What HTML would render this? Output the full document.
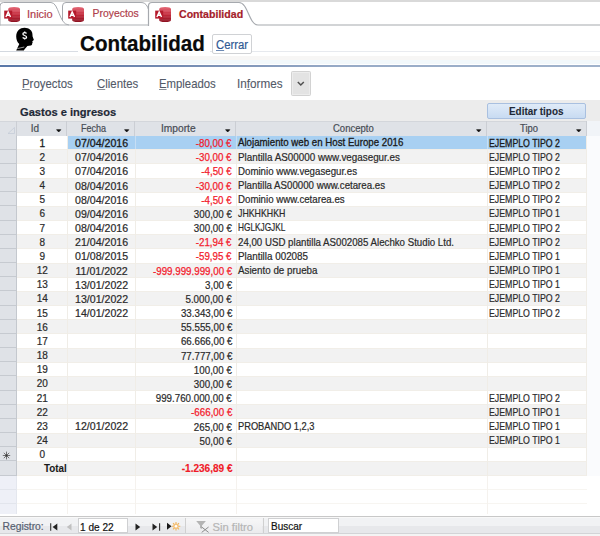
<!DOCTYPE html>
<html><head><meta charset="utf-8"><style>
html,body{margin:0;padding:0;width:600px;height:536px;overflow:hidden;background:#fff;}
body{position:relative;font-family:"Liberation Sans",sans-serif;}
.r{position:absolute;}
.t{position:absolute;white-space:nowrap;line-height:1;-webkit-text-stroke:0.2px currentColor;}
u{text-decoration-thickness:0.8px;text-underline-offset:1.2px;text-decoration-color:#8a8f98;}
</style></head><body>
<div class="r" style="left:0px;top:0.00px;width:600px;height:2.00px;background:#d9d9d9;"></div>
<svg class="r" style="left:0;top:0" width="600" height="27" viewBox="0 0 600 27">
<path d="M62.5 25 L62.5 6 Q62.5 2.5 66 2.5 L141 2.5 C147 2.5 148 8 150 14" fill="#fff" stroke="#a6a9ae" stroke-width="1"/>
<path d="M0 25.5 L0 6 Q0 2.5 3.5 2.5 L51 2.5 C59 2.5 59 25 69 25" fill="#fff" stroke="#a6a9ae" stroke-width="1"/>
<path d="M148.5 26 L148.5 6 Q148.5 2.5 152 2.5 L239 2.5 C248 2.5 249 25 258 25 L600 25" fill="#fff" stroke="#a6a9ae" stroke-width="1.2"/>
<path d="M0 25 L148.5 25" stroke="#adb1b6" stroke-width="1.2"/>
</svg>
<svg class="r" style="left:4px;top:7px" width="17" height="16" viewBox="0 0 17 16">
<defs><linearGradient id="ag4" x1="0" y1="0" x2="0" y2="1"><stop offset="0" stop-color="#e46a78"/><stop offset="0.5" stop-color="#c42a3c"/><stop offset="1" stop-color="#8c1020"/></linearGradient></defs>
<path d="M4.2 2 Q4.2 0 10.1 0 Q16 0 16 2 L16 13 Q16 15 10.1 15 Q4.2 15 4.2 13 Z" fill="url(#ag4)"/>
<path d="M5 4 H16 M5 7 H16 M5 10 H16 M5 13 H16" stroke="#ffffff" stroke-opacity="0.18" stroke-width="0.8"/>
<rect x="0.2" y="3.6" width="8" height="8" fill="#b51a2c"/>
<path d="M1.9 10 L4.2 4.9 L6.5 10 M2.9 8.2 H5.5" stroke="#fff" stroke-width="1.4" fill="none"/>
</svg>
<svg class="r" style="left:68px;top:7px" width="17" height="16" viewBox="0 0 17 16">
<defs><linearGradient id="ag68" x1="0" y1="0" x2="0" y2="1"><stop offset="0" stop-color="#e46a78"/><stop offset="0.5" stop-color="#c42a3c"/><stop offset="1" stop-color="#8c1020"/></linearGradient></defs>
<path d="M4.2 2 Q4.2 0 10.1 0 Q16 0 16 2 L16 13 Q16 15 10.1 15 Q4.2 15 4.2 13 Z" fill="url(#ag68)"/>
<path d="M5 4 H16 M5 7 H16 M5 10 H16 M5 13 H16" stroke="#ffffff" stroke-opacity="0.18" stroke-width="0.8"/>
<rect x="0.2" y="3.6" width="8" height="8" fill="#b51a2c"/>
<path d="M1.9 10 L4.2 4.9 L6.5 10 M2.9 8.2 H5.5" stroke="#fff" stroke-width="1.4" fill="none"/>
</svg>
<svg class="r" style="left:155px;top:7px" width="17" height="16" viewBox="0 0 17 16">
<defs><linearGradient id="ag155" x1="0" y1="0" x2="0" y2="1"><stop offset="0" stop-color="#e46a78"/><stop offset="0.5" stop-color="#c42a3c"/><stop offset="1" stop-color="#8c1020"/></linearGradient></defs>
<path d="M4.2 2 Q4.2 0 10.1 0 Q16 0 16 2 L16 13 Q16 15 10.1 15 Q4.2 15 4.2 13 Z" fill="url(#ag155)"/>
<path d="M5 4 H16 M5 7 H16 M5 10 H16 M5 13 H16" stroke="#ffffff" stroke-opacity="0.18" stroke-width="0.8"/>
<rect x="0.2" y="3.6" width="8" height="8" fill="#b51a2c"/>
<path d="M1.9 10 L4.2 4.9 L6.5 10 M2.9 8.2 H5.5" stroke="#fff" stroke-width="1.4" fill="none"/>
</svg>
<div class="t" style="left:27.00px;top:9.19px;font-size:11px;color:#b0404c">Inicio</div>
<div class="t" style="left:92.60px;top:9.20px;font-size:10.4px;color:#b0404c">Proyectos</div>
<div class="t" style="left:179.00px;top:9.03px;font-size:10.6px;color:#a51c2a;font-weight:bold">Contabilidad</div>
<div class="r" style="left:0px;top:51.00px;width:600px;height:1.00px;background:linear-gradient(to right,#d3d8df,#e6e9ee 40%,#eceef2);"></div>
<div class="r" style="left:0px;top:56.00px;width:600px;height:4.00px;background:#f7f6f5;"></div>
<div class="r" style="left:0px;top:60.00px;width:600px;height:4.00px;background:#f2f8fb;"></div>
<div class="r" style="left:0px;top:65.00px;width:600px;height:2.00px;background:linear-gradient(to right,#5878a9,#7189b1 28%,#98abc7 57%,#a0b2cb);"></div>
<svg class="r" style="left:12px;top:26px" width="26" height="28" viewBox="0 0 26 28">
<path d="M4.2 24.6 L7.3 18 C5.5 16.5 4.2 13.5 4.2 10.4 C4.2 5.2 8 1.8 12.5 1.8 C17 1.8 20.4 4.8 20.4 8 L20.6 10.6 L21.9 14 L20.3 15.2 L20.7 16.5 L20.2 17.2 C20.3 18.7 19.8 19.3 18.8 19.4 L15.4 20 L12.6 23.2 L11.8 24.6 Z" fill="#000"/>
<path d="M5.3 22.6 L12.3 21" stroke="#d8d8d8" stroke-width="0.7"/>
<g transform="translate(12.7 9.5) scale(0.82) translate(-12.7 -9.5)"><path d="M14.9 7 C14.5 6.2 13.7 5.9 12.7 5.9 C11.4 5.9 10.5 6.6 10.5 7.6 C10.5 8.7 11.6 9.1 12.7 9.5 C13.9 9.9 15 10.4 15 11.5 C15 12.5 14 13.1 12.7 13.1 C11.6 13.1 10.8 12.7 10.3 11.9 M12.7 4.7 V5.9 M12.7 13.1 V14.3" stroke="#fff" stroke-width="1.6" fill="none"/></g>
</svg>
<div class="r" style="left:78px;top:30.00px;width:132px;height:24.00px;background:#fff;"></div>
<div class="t" style="left:80.00px;top:33.88px;font-size:21.4px;color:#0a0a0a;font-weight:bold;transform:scaleX(0.964);transform-origin:0 0">Contabilidad</div>
<div class="r" style="left:212px;top:34.00px;width:39.5px;height:20.00px;background:#fff;border:1px solid #d0d2d5;border-radius:2px;box-sizing:border-box"></div>
<div class="t" style="left:215.60px;top:38.64px;font-size:12px;color:#305a94;transform:scaleX(0.94);transform-origin:0 0"><u style="text-decoration-color:#6d8ab5">C</u>errar</div>
<div class="t" style="left:21.70px;top:77.90px;font-size:12.4px;color:#525967;-webkit-text-stroke:0.1px currentColor;transform:scaleX(0.92);transform-origin:0 0"><u>P</u>royectos</div>
<div class="t" style="left:96.50px;top:77.90px;font-size:12.4px;color:#525967;-webkit-text-stroke:0.1px currentColor;transform:scaleX(0.92);transform-origin:0 0"><u>C</u>lientes</div>
<div class="t" style="left:158.90px;top:77.90px;font-size:12.4px;color:#525967;-webkit-text-stroke:0.1px currentColor;transform:scaleX(0.916);transform-origin:0 0"><u>E</u>mpleados</div>
<div class="t" style="left:237.00px;top:77.90px;font-size:12.4px;color:#525967;-webkit-text-stroke:0.1px currentColor;transform:scaleX(0.946);transform-origin:0 0">In<u>f</u>ormes</div>
<div class="r" style="left:291px;top:71.00px;width:19.5px;height:25.00px;background:#e3e3e3;border:1px solid #d2d2d2;border-radius:1.5px;box-sizing:border-box;box-shadow:inset 0 0 0 1px #ececec"></div>
<svg class="r" style="left:297px;top:80.5px" width="8" height="6" viewBox="0 0 8 6"><path d="M0.8 1 L3.8 4 L6.8 1" stroke="#505050" stroke-width="1.5" fill="none"/></svg>
<div class="r" style="left:0px;top:100.30px;width:600px;height:415.00px;background:#ececec;"></div>
<div class="t" style="left:20.00px;top:106.90px;font-size:11.1px;color:#1f2937;font-weight:bold">Gastos e ingresos</div>
<div class="r" style="left:487px;top:103px;width:99px;height:16px;box-sizing:border-box;border:1px solid #a9c0e0;border-radius:2px;background:linear-gradient(#e0ebf8,#c8dbf2)"></div>
<div class="t" style="left:509.00px;top:105.89px;font-size:11px;color:#1f2937;font-weight:bold;-webkit-text-stroke:0.1px currentColor;transform:scaleX(0.9);transform-origin:0 0">Editar tipos</div>
<div class="r" style="left:0px;top:121.00px;width:587px;height:15.00px;background:#dfe2e7;"></div>
<div class="r" style="left:587px;top:121.00px;width:13px;height:15.00px;background:#f1f4f8;"></div>
<div class="r" style="left:0px;top:121.00px;width:587px;height:1.00px;background:#d3d6db;"></div>
<div class="r" style="left:66px;top:121.00px;width:1.3px;height:15.00px;background:#cbced4;"></div>
<div class="r" style="left:134px;top:121.00px;width:1.3px;height:15.00px;background:#cbced4;"></div>
<div class="r" style="left:235px;top:121.00px;width:1.3px;height:15.00px;background:#cbced4;"></div>
<div class="r" style="left:486px;top:121.00px;width:1.3px;height:15.00px;background:#cbced4;"></div>
<div class="r" style="left:586px;top:121.00px;width:1.3px;height:15.00px;background:#cbced4;"></div>
<div class="r" style="left:16px;top:121.00px;width:1px;height:15.00px;background:#cbced4;"></div>
<div class="t" style="left:30.70px;top:124.03px;font-size:10px;color:#474c55">Id</div>
<div class="t" style="left:80.80px;top:124.03px;font-size:10px;color:#474c55;transform:scaleX(0.9);transform-origin:0 0">Fecha</div>
<div class="t" style="left:161.00px;top:124.03px;font-size:10px;color:#474c55;transform:scaleX(1.02);transform-origin:0 0">Importe</div>
<div class="t" style="left:333.30px;top:124.03px;font-size:10px;color:#474c55;transform:scaleX(0.95);transform-origin:0 0">Concepto</div>
<div class="t" style="left:520.00px;top:124.03px;font-size:10px;color:#474c55;transform:scaleX(0.94);transform-origin:0 0">Tipo</div>
<svg class="r" style="left:56.3px;top:128.5px" width="6" height="4" viewBox="0 0 6 4"><path d="M0.6 0.7 H4.8 L2.7 3 Z" fill="#111" stroke="#111" stroke-width="0.7" stroke-linejoin="round"/></svg>
<svg class="r" style="left:124px;top:128.5px" width="6" height="4" viewBox="0 0 6 4"><path d="M0.6 0.7 H4.8 L2.7 3 Z" fill="#111" stroke="#111" stroke-width="0.7" stroke-linejoin="round"/></svg>
<svg class="r" style="left:225.3px;top:128.5px" width="6" height="4" viewBox="0 0 6 4"><path d="M0.6 0.7 H4.8 L2.7 3 Z" fill="#111" stroke="#111" stroke-width="0.7" stroke-linejoin="round"/></svg>
<svg class="r" style="left:475.5px;top:128.5px" width="6" height="4" viewBox="0 0 6 4"><path d="M0.6 0.7 H4.8 L2.7 3 Z" fill="#111" stroke="#111" stroke-width="0.7" stroke-linejoin="round"/></svg>
<svg class="r" style="left:575.8px;top:128.5px" width="6" height="4" viewBox="0 0 6 4"><path d="M0.6 0.7 H4.8 L2.7 3 Z" fill="#111" stroke="#111" stroke-width="0.7" stroke-linejoin="round"/></svg>
<svg class="r" style="left:7px;top:127px" width="8" height="7" viewBox="0 0 8 7"><path d="M7.5 0.5 L7.5 6.5 L1 6.5 Z" fill="none" stroke="#c5cdd8" stroke-width="0.8"/></svg>
<div class="r" style="left:17px;top:135.50px;width:570px;height:14.17px;background:#ffffff;"></div>
<div class="r" style="left:67px;top:135.50px;width:520px;height:13.57px;background:#a8d0f2;"></div>
<div class="r" style="left:0px;top:135.50px;width:16px;height:14.17px;background:#dfe2e7;"></div>
<div class="r" style="left:0px;top:148.67px;width:16px;height:1.00px;background:#c6cad0;"></div>
<div class="r" style="left:17px;top:149.67px;width:570px;height:14.17px;background:#f2f2f2;"></div>
<div class="r" style="left:0px;top:149.67px;width:16px;height:14.17px;background:#dfe2e7;"></div>
<div class="r" style="left:0px;top:162.84px;width:16px;height:1.00px;background:#c6cad0;"></div>
<div class="r" style="left:17px;top:163.84px;width:570px;height:14.17px;background:#ffffff;"></div>
<div class="r" style="left:0px;top:163.84px;width:16px;height:14.17px;background:#dfe2e7;"></div>
<div class="r" style="left:0px;top:177.01px;width:16px;height:1.00px;background:#c6cad0;"></div>
<div class="r" style="left:17px;top:178.01px;width:570px;height:14.17px;background:#f2f2f2;"></div>
<div class="r" style="left:0px;top:178.01px;width:16px;height:14.17px;background:#dfe2e7;"></div>
<div class="r" style="left:0px;top:191.18px;width:16px;height:1.00px;background:#c6cad0;"></div>
<div class="r" style="left:17px;top:192.18px;width:570px;height:14.17px;background:#ffffff;"></div>
<div class="r" style="left:0px;top:192.18px;width:16px;height:14.17px;background:#dfe2e7;"></div>
<div class="r" style="left:0px;top:205.35px;width:16px;height:1.00px;background:#c6cad0;"></div>
<div class="r" style="left:17px;top:206.35px;width:570px;height:14.17px;background:#f2f2f2;"></div>
<div class="r" style="left:0px;top:206.35px;width:16px;height:14.17px;background:#dfe2e7;"></div>
<div class="r" style="left:0px;top:219.52px;width:16px;height:1.00px;background:#c6cad0;"></div>
<div class="r" style="left:17px;top:220.52px;width:570px;height:14.17px;background:#ffffff;"></div>
<div class="r" style="left:0px;top:220.52px;width:16px;height:14.17px;background:#dfe2e7;"></div>
<div class="r" style="left:0px;top:233.69px;width:16px;height:1.00px;background:#c6cad0;"></div>
<div class="r" style="left:17px;top:234.69px;width:570px;height:14.17px;background:#f2f2f2;"></div>
<div class="r" style="left:0px;top:234.69px;width:16px;height:14.17px;background:#dfe2e7;"></div>
<div class="r" style="left:0px;top:247.86px;width:16px;height:1.00px;background:#c6cad0;"></div>
<div class="r" style="left:17px;top:248.86px;width:570px;height:14.17px;background:#ffffff;"></div>
<div class="r" style="left:0px;top:248.86px;width:16px;height:14.17px;background:#dfe2e7;"></div>
<div class="r" style="left:0px;top:262.03px;width:16px;height:1.00px;background:#c6cad0;"></div>
<div class="r" style="left:17px;top:263.03px;width:570px;height:14.17px;background:#f2f2f2;"></div>
<div class="r" style="left:0px;top:263.03px;width:16px;height:14.17px;background:#dfe2e7;"></div>
<div class="r" style="left:0px;top:276.20px;width:16px;height:1.00px;background:#c6cad0;"></div>
<div class="r" style="left:17px;top:277.20px;width:570px;height:14.17px;background:#ffffff;"></div>
<div class="r" style="left:0px;top:277.20px;width:16px;height:14.17px;background:#dfe2e7;"></div>
<div class="r" style="left:0px;top:290.37px;width:16px;height:1.00px;background:#c6cad0;"></div>
<div class="r" style="left:17px;top:291.37px;width:570px;height:14.17px;background:#f2f2f2;"></div>
<div class="r" style="left:0px;top:291.37px;width:16px;height:14.17px;background:#dfe2e7;"></div>
<div class="r" style="left:0px;top:304.54px;width:16px;height:1.00px;background:#c6cad0;"></div>
<div class="r" style="left:17px;top:305.54px;width:570px;height:14.17px;background:#ffffff;"></div>
<div class="r" style="left:0px;top:305.54px;width:16px;height:14.17px;background:#dfe2e7;"></div>
<div class="r" style="left:0px;top:318.71px;width:16px;height:1.00px;background:#c6cad0;"></div>
<div class="r" style="left:17px;top:319.71px;width:570px;height:14.17px;background:#f2f2f2;"></div>
<div class="r" style="left:0px;top:319.71px;width:16px;height:14.17px;background:#dfe2e7;"></div>
<div class="r" style="left:0px;top:332.88px;width:16px;height:1.00px;background:#c6cad0;"></div>
<div class="r" style="left:17px;top:333.88px;width:570px;height:14.17px;background:#ffffff;"></div>
<div class="r" style="left:0px;top:333.88px;width:16px;height:14.17px;background:#dfe2e7;"></div>
<div class="r" style="left:0px;top:347.05px;width:16px;height:1.00px;background:#c6cad0;"></div>
<div class="r" style="left:17px;top:348.05px;width:570px;height:14.17px;background:#f2f2f2;"></div>
<div class="r" style="left:0px;top:348.05px;width:16px;height:14.17px;background:#dfe2e7;"></div>
<div class="r" style="left:0px;top:361.22px;width:16px;height:1.00px;background:#c6cad0;"></div>
<div class="r" style="left:17px;top:362.22px;width:570px;height:14.17px;background:#ffffff;"></div>
<div class="r" style="left:0px;top:362.22px;width:16px;height:14.17px;background:#dfe2e7;"></div>
<div class="r" style="left:0px;top:375.39px;width:16px;height:1.00px;background:#c6cad0;"></div>
<div class="r" style="left:17px;top:376.39px;width:570px;height:14.17px;background:#f2f2f2;"></div>
<div class="r" style="left:0px;top:376.39px;width:16px;height:14.17px;background:#dfe2e7;"></div>
<div class="r" style="left:0px;top:389.56px;width:16px;height:1.00px;background:#c6cad0;"></div>
<div class="r" style="left:17px;top:390.56px;width:570px;height:14.17px;background:#ffffff;"></div>
<div class="r" style="left:0px;top:390.56px;width:16px;height:14.17px;background:#dfe2e7;"></div>
<div class="r" style="left:0px;top:403.73px;width:16px;height:1.00px;background:#c6cad0;"></div>
<div class="r" style="left:17px;top:404.73px;width:570px;height:14.17px;background:#f2f2f2;"></div>
<div class="r" style="left:0px;top:404.73px;width:16px;height:14.17px;background:#dfe2e7;"></div>
<div class="r" style="left:0px;top:417.90px;width:16px;height:1.00px;background:#c6cad0;"></div>
<div class="r" style="left:17px;top:418.90px;width:570px;height:14.17px;background:#ffffff;"></div>
<div class="r" style="left:0px;top:418.90px;width:16px;height:14.17px;background:#dfe2e7;"></div>
<div class="r" style="left:0px;top:432.07px;width:16px;height:1.00px;background:#c6cad0;"></div>
<div class="r" style="left:17px;top:433.07px;width:570px;height:14.17px;background:#f2f2f2;"></div>
<div class="r" style="left:0px;top:433.07px;width:16px;height:14.17px;background:#dfe2e7;"></div>
<div class="r" style="left:0px;top:446.24px;width:16px;height:1.00px;background:#c6cad0;"></div>
<div class="r" style="left:17px;top:447.24px;width:570px;height:14.17px;background:#ffffff;"></div>
<div class="r" style="left:0px;top:447.24px;width:16px;height:14.17px;background:#dfe2e7;"></div>
<div class="r" style="left:0px;top:460.41px;width:16px;height:1.00px;background:#c6cad0;"></div>
<div class="r" style="left:17px;top:461.41px;width:570px;height:14.17px;background:#f2f2f2;"></div>
<div class="r" style="left:0px;top:461.41px;width:16px;height:14.17px;background:#dfe2e7;"></div>
<div class="r" style="left:0px;top:474.58px;width:16px;height:1.00px;background:#c6cad0;"></div>
<div class="r" style="left:17px;top:149.17px;width:570px;height:1.00px;background:#f1eee8;"></div>
<div class="r" style="left:17px;top:163.34px;width:570px;height:1.00px;background:#f1eee8;"></div>
<div class="r" style="left:17px;top:177.51px;width:570px;height:1.00px;background:#f1eee8;"></div>
<div class="r" style="left:17px;top:191.68px;width:570px;height:1.00px;background:#f1eee8;"></div>
<div class="r" style="left:17px;top:205.85px;width:570px;height:1.00px;background:#f1eee8;"></div>
<div class="r" style="left:17px;top:220.02px;width:570px;height:1.00px;background:#f1eee8;"></div>
<div class="r" style="left:17px;top:234.19px;width:570px;height:1.00px;background:#f1eee8;"></div>
<div class="r" style="left:17px;top:248.36px;width:570px;height:1.00px;background:#f1eee8;"></div>
<div class="r" style="left:17px;top:262.53px;width:570px;height:1.00px;background:#f1eee8;"></div>
<div class="r" style="left:17px;top:276.70px;width:570px;height:1.00px;background:#f1eee8;"></div>
<div class="r" style="left:17px;top:290.87px;width:570px;height:1.00px;background:#f1eee8;"></div>
<div class="r" style="left:17px;top:305.04px;width:570px;height:1.00px;background:#f1eee8;"></div>
<div class="r" style="left:17px;top:319.21px;width:570px;height:1.00px;background:#f1eee8;"></div>
<div class="r" style="left:17px;top:333.38px;width:570px;height:1.00px;background:#f1eee8;"></div>
<div class="r" style="left:17px;top:347.55px;width:570px;height:1.00px;background:#f1eee8;"></div>
<div class="r" style="left:17px;top:361.72px;width:570px;height:1.00px;background:#f1eee8;"></div>
<div class="r" style="left:17px;top:375.89px;width:570px;height:1.00px;background:#f1eee8;"></div>
<div class="r" style="left:17px;top:390.06px;width:570px;height:1.00px;background:#f1eee8;"></div>
<div class="r" style="left:17px;top:404.23px;width:570px;height:1.00px;background:#f1eee8;"></div>
<div class="r" style="left:17px;top:418.40px;width:570px;height:1.00px;background:#f1eee8;"></div>
<div class="r" style="left:17px;top:432.57px;width:570px;height:1.00px;background:#f1eee8;"></div>
<div class="r" style="left:17px;top:446.74px;width:570px;height:1.00px;background:#f1eee8;"></div>
<div class="r" style="left:17px;top:460.91px;width:570px;height:1.00px;background:#f1eee8;"></div>
<div class="r" style="left:17px;top:475.08px;width:570px;height:1.00px;background:#f1eee8;"></div>
<div class="r" style="left:67px;top:135.50px;width:1px;height:340.08px;background:#f0ede7;"></div>
<div class="r" style="left:135px;top:135.50px;width:1px;height:340.08px;background:#f0ede7;"></div>
<div class="r" style="left:236px;top:135.50px;width:1px;height:340.08px;background:#f0ede7;"></div>
<div class="r" style="left:487px;top:135.50px;width:1px;height:340.08px;background:#f0ede7;"></div>
<div class="r" style="left:586px;top:135.50px;width:1px;height:340.08px;background:#f0ede7;"></div>
<div class="r" style="left:16px;top:135.50px;width:1px;height:340.08px;background:#c4c8ce;"></div>
<div class="r" style="left:135px;top:135.50px;width:1px;height:13.57px;background:#c6def4;"></div>
<div class="r" style="left:236px;top:135.50px;width:1px;height:13.57px;background:#c6def4;"></div>
<div class="r" style="left:487px;top:135.50px;width:1px;height:13.57px;background:#c6def4;"></div>
<div class="t" style="left:-17.70px;width:120px;text-align:center;top:138.53px;font-size:10px;color:#1a1a1a;-webkit-text-stroke:0.3px currentColor">1</div>
<div class="t" style="left:41.60px;width:120px;text-align:center;top:138.03px;font-size:10.6px;color:#1a1a1a;-webkit-text-stroke:0.3px currentColor">07/04/2016</div>
<div class="t" style="right:368.00px;top:138.11px;font-size:10.5px;color:#f2202c;-webkit-text-stroke:0.25px currentColor;transform:scaleX(0.93);transform-origin:100% 0">-80,00 €</div>
<div class="t" style="left:238.00px;top:138.45px;font-size:10.1px;color:#1a1a1a;-webkit-text-stroke:0.3px currentColor;transform:scaleX(0.96);transform-origin:0 0">Alojamiento web en Host Europe 2016</div>
<div class="t" style="left:489.00px;top:138.53px;font-size:10px;color:#1a1a1a;-webkit-text-stroke:0.3px currentColor;transform:scaleX(0.877);transform-origin:0 0">EJEMPLO TIPO 2</div>
<div class="t" style="left:-17.70px;width:120px;text-align:center;top:152.70px;font-size:10px;color:#2a2a2a">2</div>
<div class="t" style="left:41.60px;width:120px;text-align:center;top:152.20px;font-size:10.6px;color:#2a2a2a">07/04/2016</div>
<div class="t" style="right:368.00px;top:152.28px;font-size:10.5px;color:#f2202c;-webkit-text-stroke:0.25px currentColor;transform:scaleX(0.93);transform-origin:100% 0">-30,00 €</div>
<div class="t" style="left:238.00px;top:152.62px;font-size:10.1px;color:#2a2a2a;transform:scaleX(0.975);transform-origin:0 0">Plantilla AS00000 www.vegasegur.es</div>
<div class="t" style="left:489.00px;top:152.70px;font-size:10px;color:#2a2a2a;transform:scaleX(0.877);transform-origin:0 0">EJEMPLO TIPO 2</div>
<div class="t" style="left:-17.70px;width:120px;text-align:center;top:166.88px;font-size:10px;color:#2a2a2a">3</div>
<div class="t" style="left:41.60px;width:120px;text-align:center;top:166.37px;font-size:10.6px;color:#2a2a2a">07/04/2016</div>
<div class="t" style="right:368.00px;top:166.45px;font-size:10.5px;color:#f2202c;-webkit-text-stroke:0.25px currentColor;transform:scaleX(0.93);transform-origin:100% 0">-4,50 €</div>
<div class="t" style="left:238.00px;top:166.79px;font-size:10.1px;color:#2a2a2a;transform:scaleX(0.96);transform-origin:0 0">Dominio www.vegasegur.es</div>
<div class="t" style="left:489.00px;top:166.88px;font-size:10px;color:#2a2a2a;transform:scaleX(0.877);transform-origin:0 0">EJEMPLO TIPO 2</div>
<div class="t" style="left:-17.70px;width:120px;text-align:center;top:181.04px;font-size:10px;color:#2a2a2a">4</div>
<div class="t" style="left:41.60px;width:120px;text-align:center;top:180.54px;font-size:10.6px;color:#2a2a2a">08/04/2016</div>
<div class="t" style="right:368.00px;top:180.62px;font-size:10.5px;color:#f2202c;-webkit-text-stroke:0.25px currentColor;transform:scaleX(0.93);transform-origin:100% 0">-30,00 €</div>
<div class="t" style="left:238.00px;top:180.96px;font-size:10.1px;color:#2a2a2a;transform:scaleX(0.96);transform-origin:0 0">Plantilla AS00000 www.cetarea.es</div>
<div class="t" style="left:489.00px;top:181.04px;font-size:10px;color:#2a2a2a;transform:scaleX(0.877);transform-origin:0 0">EJEMPLO TIPO 2</div>
<div class="t" style="left:-17.70px;width:120px;text-align:center;top:195.22px;font-size:10px;color:#2a2a2a">5</div>
<div class="t" style="left:41.60px;width:120px;text-align:center;top:194.71px;font-size:10.6px;color:#2a2a2a">08/04/2016</div>
<div class="t" style="right:368.00px;top:194.79px;font-size:10.5px;color:#f2202c;-webkit-text-stroke:0.25px currentColor;transform:scaleX(0.93);transform-origin:100% 0">-4,50 €</div>
<div class="t" style="left:238.00px;top:195.13px;font-size:10.1px;color:#2a2a2a;transform:scaleX(0.96);transform-origin:0 0">Dominio www.cetarea.es</div>
<div class="t" style="left:489.00px;top:195.22px;font-size:10px;color:#2a2a2a;transform:scaleX(0.877);transform-origin:0 0">EJEMPLO TIPO 2</div>
<div class="t" style="left:-17.70px;width:120px;text-align:center;top:209.38px;font-size:10px;color:#2a2a2a">6</div>
<div class="t" style="left:41.60px;width:120px;text-align:center;top:208.88px;font-size:10.6px;color:#2a2a2a">09/04/2016</div>
<div class="t" style="right:368.00px;top:208.96px;font-size:10.5px;color:#2a2a2a;transform:scaleX(0.93);transform-origin:100% 0">300,00 €</div>
<div class="t" style="left:238.00px;top:209.30px;font-size:10.1px;color:#2a2a2a;transform:scaleX(0.87);transform-origin:0 0">JHKHKHKH</div>
<div class="t" style="left:489.00px;top:209.38px;font-size:10px;color:#2a2a2a;transform:scaleX(0.877);transform-origin:0 0">EJEMPLO TIPO 1</div>
<div class="t" style="left:-17.70px;width:120px;text-align:center;top:223.55px;font-size:10px;color:#2a2a2a">7</div>
<div class="t" style="left:41.60px;width:120px;text-align:center;top:223.05px;font-size:10.6px;color:#2a2a2a">08/04/2016</div>
<div class="t" style="right:368.00px;top:223.13px;font-size:10.5px;color:#2a2a2a;transform:scaleX(0.93);transform-origin:100% 0">300,00 €</div>
<div class="t" style="left:238.00px;top:223.47px;font-size:10.1px;color:#2a2a2a;transform:scaleX(0.82);transform-origin:0 0">HGLKJGJKL</div>
<div class="t" style="left:489.00px;top:223.55px;font-size:10px;color:#2a2a2a;transform:scaleX(0.877);transform-origin:0 0">EJEMPLO TIPO 2</div>
<div class="t" style="left:-17.70px;width:120px;text-align:center;top:237.72px;font-size:10px;color:#2a2a2a">8</div>
<div class="t" style="left:41.60px;width:120px;text-align:center;top:237.22px;font-size:10.6px;color:#2a2a2a">21/04/2016</div>
<div class="t" style="right:368.00px;top:237.30px;font-size:10.5px;color:#f2202c;-webkit-text-stroke:0.25px currentColor;transform:scaleX(0.93);transform-origin:100% 0">-21,94 €</div>
<div class="t" style="left:238.00px;top:237.64px;font-size:10.1px;color:#2a2a2a;transform:scaleX(0.96);transform-origin:0 0">24,00 USD plantilla AS002085 Alechko Studio Ltd.</div>
<div class="t" style="left:489.00px;top:237.72px;font-size:10px;color:#2a2a2a;transform:scaleX(0.877);transform-origin:0 0">EJEMPLO TIPO 2</div>
<div class="t" style="left:-17.70px;width:120px;text-align:center;top:251.90px;font-size:10px;color:#2a2a2a">9</div>
<div class="t" style="left:41.60px;width:120px;text-align:center;top:251.39px;font-size:10.6px;color:#2a2a2a">01/08/2015</div>
<div class="t" style="right:368.00px;top:251.47px;font-size:10.5px;color:#f2202c;-webkit-text-stroke:0.25px currentColor;transform:scaleX(0.93);transform-origin:100% 0">-59,95 €</div>
<div class="t" style="left:238.00px;top:251.81px;font-size:10.1px;color:#2a2a2a;transform:scaleX(0.975);transform-origin:0 0">Plantilla 002085</div>
<div class="t" style="left:489.00px;top:251.90px;font-size:10px;color:#2a2a2a;transform:scaleX(0.877);transform-origin:0 0">EJEMPLO TIPO 1</div>
<div class="t" style="left:-17.70px;width:120px;text-align:center;top:266.06px;font-size:10px;color:#2a2a2a">12</div>
<div class="t" style="left:41.60px;width:120px;text-align:center;top:265.56px;font-size:10.6px;color:#2a2a2a">11/01/2022</div>
<div class="t" style="right:368.00px;top:265.64px;font-size:10.5px;color:#f2202c;-webkit-text-stroke:0.25px currentColor;transform:scaleX(0.93);transform-origin:100% 0">-999.999.999,00 €</div>
<div class="t" style="left:238.00px;top:265.98px;font-size:10.1px;color:#2a2a2a;transform:scaleX(0.97);transform-origin:0 0">Asiento de prueba</div>
<div class="t" style="left:489.00px;top:266.06px;font-size:10px;color:#2a2a2a;transform:scaleX(0.877);transform-origin:0 0">EJEMPLO TIPO 1</div>
<div class="t" style="left:-17.70px;width:120px;text-align:center;top:280.24px;font-size:10px;color:#2a2a2a">13</div>
<div class="t" style="left:41.60px;width:120px;text-align:center;top:279.73px;font-size:10.6px;color:#2a2a2a">13/01/2022</div>
<div class="t" style="right:368.00px;top:279.81px;font-size:10.5px;color:#2a2a2a;transform:scaleX(0.93);transform-origin:100% 0">3,00 €</div>
<div class="t" style="left:489.00px;top:280.24px;font-size:10px;color:#2a2a2a;transform:scaleX(0.877);transform-origin:0 0">EJEMPLO TIPO 1</div>
<div class="t" style="left:-17.70px;width:120px;text-align:center;top:294.41px;font-size:10px;color:#2a2a2a">14</div>
<div class="t" style="left:41.60px;width:120px;text-align:center;top:293.90px;font-size:10.6px;color:#2a2a2a">13/01/2022</div>
<div class="t" style="right:368.00px;top:293.98px;font-size:10.5px;color:#2a2a2a;transform:scaleX(0.93);transform-origin:100% 0">5.000,00 €</div>
<div class="t" style="left:489.00px;top:294.41px;font-size:10px;color:#2a2a2a;transform:scaleX(0.877);transform-origin:0 0">EJEMPLO TIPO 2</div>
<div class="t" style="left:-17.70px;width:120px;text-align:center;top:308.57px;font-size:10px;color:#2a2a2a">15</div>
<div class="t" style="left:41.60px;width:120px;text-align:center;top:308.07px;font-size:10.6px;color:#2a2a2a">14/01/2022</div>
<div class="t" style="right:368.00px;top:308.15px;font-size:10.5px;color:#2a2a2a;transform:scaleX(0.93);transform-origin:100% 0">33.343,00 €</div>
<div class="t" style="left:489.00px;top:308.57px;font-size:10px;color:#2a2a2a;transform:scaleX(0.877);transform-origin:0 0">EJEMPLO TIPO 2</div>
<div class="t" style="left:-17.70px;width:120px;text-align:center;top:322.75px;font-size:10px;color:#2a2a2a">16</div>
<div class="t" style="right:368.00px;top:322.32px;font-size:10.5px;color:#2a2a2a;transform:scaleX(0.93);transform-origin:100% 0">55.555,00 €</div>
<div class="t" style="left:-17.70px;width:120px;text-align:center;top:336.92px;font-size:10px;color:#2a2a2a">17</div>
<div class="t" style="right:368.00px;top:336.49px;font-size:10.5px;color:#2a2a2a;transform:scaleX(0.93);transform-origin:100% 0">66.666,00 €</div>
<div class="t" style="left:-17.70px;width:120px;text-align:center;top:351.09px;font-size:10px;color:#2a2a2a">18</div>
<div class="t" style="right:368.00px;top:350.66px;font-size:10.5px;color:#2a2a2a;transform:scaleX(0.93);transform-origin:100% 0">77.777,00 €</div>
<div class="t" style="left:-17.70px;width:120px;text-align:center;top:365.26px;font-size:10px;color:#2a2a2a">19</div>
<div class="t" style="right:368.00px;top:364.83px;font-size:10.5px;color:#2a2a2a;transform:scaleX(0.93);transform-origin:100% 0">100,00 €</div>
<div class="t" style="left:-17.70px;width:120px;text-align:center;top:379.43px;font-size:10px;color:#2a2a2a">20</div>
<div class="t" style="right:368.00px;top:379.00px;font-size:10.5px;color:#2a2a2a;transform:scaleX(0.93);transform-origin:100% 0">300,00 €</div>
<div class="t" style="left:-17.70px;width:120px;text-align:center;top:393.60px;font-size:10px;color:#2a2a2a">21</div>
<div class="t" style="right:368.00px;top:393.17px;font-size:10.5px;color:#2a2a2a;transform:scaleX(0.93);transform-origin:100% 0">999.760.000,00 €</div>
<div class="t" style="left:489.00px;top:393.60px;font-size:10px;color:#2a2a2a;transform:scaleX(0.877);transform-origin:0 0">EJEMPLO TIPO 2</div>
<div class="t" style="left:-17.70px;width:120px;text-align:center;top:407.77px;font-size:10px;color:#2a2a2a">22</div>
<div class="t" style="right:368.00px;top:407.34px;font-size:10.5px;color:#f2202c;-webkit-text-stroke:0.25px currentColor;transform:scaleX(0.93);transform-origin:100% 0">-666,00 €</div>
<div class="t" style="left:489.00px;top:407.77px;font-size:10px;color:#2a2a2a;transform:scaleX(0.877);transform-origin:0 0">EJEMPLO TIPO 1</div>
<div class="t" style="left:-17.70px;width:120px;text-align:center;top:421.94px;font-size:10px;color:#2a2a2a">23</div>
<div class="t" style="left:41.60px;width:120px;text-align:center;top:421.43px;font-size:10.6px;color:#2a2a2a">12/01/2022</div>
<div class="t" style="right:368.00px;top:421.51px;font-size:10.5px;color:#2a2a2a;transform:scaleX(0.93);transform-origin:100% 0">265,00 €</div>
<div class="t" style="left:238.00px;top:421.85px;font-size:10.1px;color:#2a2a2a;transform:scaleX(0.92);transform-origin:0 0">PROBANDO 1,2,3</div>
<div class="t" style="left:489.00px;top:421.94px;font-size:10px;color:#2a2a2a;transform:scaleX(0.877);transform-origin:0 0">EJEMPLO TIPO 1</div>
<div class="t" style="left:-17.70px;width:120px;text-align:center;top:436.11px;font-size:10px;color:#2a2a2a">24</div>
<div class="t" style="right:368.00px;top:435.68px;font-size:10.5px;color:#2a2a2a;transform:scaleX(0.93);transform-origin:100% 0">50,00 €</div>
<div class="t" style="left:489.00px;top:436.11px;font-size:10px;color:#2a2a2a;transform:scaleX(0.877);transform-origin:0 0">EJEMPLO TIPO 1</div>
<div class="t" style="left:-17.70px;width:120px;text-align:center;top:450.28px;font-size:10px;color:#2a2a2a">0</div>
<svg class="r" style="left:1.5px;top:451.3px" width="9" height="9" viewBox="0 0 9 9"><path d="M4.5 0.6 V8.4 M0.8 4.5 H8.2 M1.8 1.8 L7.2 7.2 M7.2 1.8 L1.8 7.2" stroke="#555" stroke-width="0.8"/><circle cx="4.5" cy="4.5" r="0.9" fill="#333"/></svg>
<div class="t" style="right:533.30px;top:463.35px;font-size:10.7px;color:#1a1a1a;font-weight:bold;-webkit-text-stroke:0.1px currentColor;transform:scaleX(0.92);transform-origin:100% 0">Total</div>
<div class="t" style="right:367.70px;top:463.44px;font-size:10.6px;color:#f01a28;font-weight:bold;-webkit-text-stroke:0.15px currentColor;transform:scaleX(0.95);transform-origin:100% 0">-1.236,89 €</div>
<div class="r" style="left:0px;top:475.58px;width:600px;height:40.42px;background:#ffffff;"></div>
<div class="r" style="left:0px;top:475.58px;width:16px;height:38.42px;background:#eef0f7;"></div>
<div class="r" style="left:0px;top:489.25px;width:16px;height:1.00px;background:#e2e5ec;"></div>
<div class="r" style="left:17px;top:489.25px;width:570px;height:1.00px;background:#f7f5f1;"></div>
<div class="r" style="left:0px;top:503.42px;width:16px;height:1.00px;background:#e2e5ec;"></div>
<div class="r" style="left:17px;top:503.42px;width:570px;height:1.00px;background:#f7f5f1;"></div>
<div class="r" style="left:67px;top:475.58px;width:1px;height:38.42px;background:#f5f2ee;"></div>
<div class="r" style="left:135px;top:475.58px;width:1px;height:38.42px;background:#f5f2ee;"></div>
<div class="r" style="left:236px;top:475.58px;width:1px;height:38.42px;background:#f5f2ee;"></div>
<div class="r" style="left:487px;top:475.58px;width:1px;height:38.42px;background:#f5f2ee;"></div>
<div class="r" style="left:16px;top:475.58px;width:1px;height:38.42px;background:#e4e7ee;"></div>
<div class="r" style="left:587px;top:135.50px;width:13px;height:340.08px;background:#fafbfd;"></div>
<div class="r" style="left:0px;top:516.00px;width:600px;height:1.00px;background:#c8c8c8;"></div>
<div class="r" style="left:0px;top:517.00px;width:600px;height:1.00px;background:#f8f8f8;"></div>
<div class="r" style="left:0px;top:518.00px;width:600px;height:8.00px;background:#f1f2f4;"></div>
<div class="r" style="left:0px;top:526.00px;width:600px;height:7.00px;background:#e7e8eb;"></div>
<div class="r" style="left:0px;top:533.00px;width:600px;height:1.00px;background:#d3d4d7;"></div>
<div class="r" style="left:0px;top:534.00px;width:600px;height:2.00px;background:#f4f4f4;"></div>
<div class="t" style="left:2.50px;top:521.58px;font-size:10.3px;color:#566070">Registro:</div>
<svg class="r" style="left:49.5px;top:522.5px" width="9" height="8" viewBox="0 0 9 8"><path d="M0.7 0.3 V7.7" stroke="#333" stroke-width="1.1"/><path d="M7.3 0.5 V7.5 L2.6 4 Z" fill="#222"/></svg>
<svg class="r" style="left:66px;top:522.5px" width="6" height="8" viewBox="0 0 6 8"><path d="M5.5 0.5 V7.5 L0.8 4 Z" fill="#c0c0c0"/></svg>
<div class="r" style="left:78px;top:518.30px;width:49.5px;height:15.00px;background:#fff;border:1px solid #cfd0d2;box-sizing:border-box"></div>
<div class="t" style="left:80.30px;top:521.63px;font-size:10.6px;color:#111;transform:scaleX(0.95);transform-origin:0 0">1 de 22</div>
<svg class="r" style="left:135px;top:522.5px" width="6" height="8" viewBox="0 0 6 8"><path d="M0.5 0.5 V7.5 L5.2 4 Z" fill="#222"/></svg>
<svg class="r" style="left:152px;top:522.5px" width="9" height="8" viewBox="0 0 9 8"><path d="M0.5 0.5 V7.5 L5.2 4 Z" fill="#222"/><path d="M7.6 0.3 V7.7" stroke="#333" stroke-width="1.1"/></svg>
<svg class="r" style="left:166px;top:521px" width="16" height="11" viewBox="0 0 16 11"><path d="M1 1.8 V8.7 L5.5 5.25 Z" fill="#1a1a1a"/><g stroke="#f2b45a" stroke-width="1.1"><path d="M10 0.9 V9.6 M5.7 5.25 H14.3 M7 2.2 L13 8.3 M13 2.2 L7 8.3"/></g><circle cx="10" cy="5.25" r="2.7" fill="#f5c27a"/><circle cx="10" cy="5.25" r="1.3" fill="#fff"/></svg>
<div class="r" style="left:184.5px;top:518.00px;width:1px;height:15.00px;background:#d0d0d0;"></div>
<div class="r" style="left:186px;top:518.50px;width:76px;height:14.50px;background:linear-gradient(#f6f6f7,#ebebed);"></div>
<svg class="r" style="left:195px;top:520px" width="15" height="14" viewBox="0 0 15 14"><path d="M1.2 1 H10.9 L7 5.5 V9 L5 8 V5.5 Z" fill="#b4b4b4"/><path d="M6.7 7 L13.6 12.4 M13.6 7 L6.7 12.4" stroke="#8c8c8c" stroke-width="1"/></svg>
<div class="t" style="left:212.60px;top:521.52px;font-size:11.2px;color:#b5b5b5">Sin filtro</div>
<div class="r" style="left:262.5px;top:518.00px;width:1px;height:15.00px;background:#d0d0d0;"></div>
<div class="r" style="left:268px;top:518.30px;width:71px;height:15.00px;background:#fff;border:1px solid #cfd0d2;box-sizing:border-box"></div>
<div class="t" style="left:271.00px;top:521.80px;font-size:10.4px;color:#111;transform:scaleX(0.96);transform-origin:0 0">Buscar</div>
</body></html>
